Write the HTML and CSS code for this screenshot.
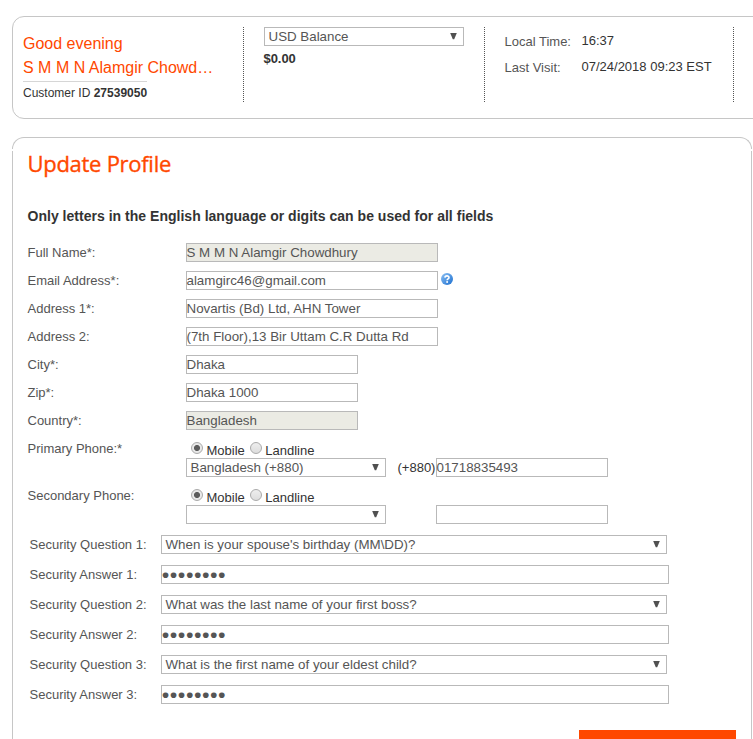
FILE: index.html
```html
<!DOCTYPE html>
<html lang="en">
<head>
<meta charset="utf-8">
<title>Update Profile</title>
<link rel="stylesheet" href="styles.css">
</head>
<body>
<svg class="defs" width="0" height="0" aria-hidden="true">
  <symbol id="arrow" viewBox="0 0 7 7"><path d="M.2 .1H6.8L4.2 6.3H2.8Z" fill="#505050"/></symbol>
</svg>
<header class="account">
  <section class="greeting">
    <div class="hello">Good evening</div>
    <div class="hello name">S M M N Alamgir Chowd…</div>
    <div class="customer">Customer ID <b>27539050</b></div>
  </section>
  <section class="balance">
    <div class="field select"><span>USD Balance</span><svg><use href="#arrow"/></svg></div>
    <div class="amount">$0.00</div>
  </section>
  <section class="times">
    <span class="key">Local Time:</span><span class="value">16:37</span>
    <span class="key">Last Visit:</span><span class="value">07/24/2018 09:23 EST</span>
  </section>
</header>
<main class="profile">
  <h1>Update Profile</h1>
  <p class="note">Only letters in the English language or digits can be used for all fields</p>
  <div class="row"><label>Full Name*:</label><div class="field wide locked">S M M N Alamgir Chowdhury</div></div>
  <div class="row"><label>Email Address*:</label><div class="field wide">alamgirc46@gmail.com</div>
    <svg class="help" viewBox="0 0 12 12"><defs><linearGradient id="blue" x2="1" y2="1"><stop stop-color="#8cc0f3"/><stop offset="1" stop-color="#1b6fd0"/></linearGradient></defs><circle cx="6" cy="6" r="6" fill="url(#blue)"/><path d="M3.9 4.6C4 2.2 8.1 2.3 8 4.6C7.9 5.9 6.1 5.8 6.1 7.2" fill="none" stroke="#fff" stroke-width="1.6"/><circle cx="6.1" cy="9.1" r="1" fill="#fff"/></svg></div>
  <div class="row"><label>Address 1*:</label><div class="field wide">Novartis (Bd) Ltd, AHN Tower</div></div>
  <div class="row"><label>Address 2:</label><div class="field wide">(7th Floor),13 Bir Uttam C.R Dutta Rd</div></div>
  <div class="row"><label>City*:</label><div class="field">Dhaka</div></div>
  <div class="row"><label>Zip*:</label><div class="field">Dhaka 1000</div></div>
  <div class="row"><label>Country*:</label><div class="field locked">Bangladesh</div></div>
  <div class="row phone"><label>Primary Phone:*</label>
    <div class="phone-body">
      <div class="kinds"><i class="radio on"></i><span class="mobile">Mobile</span><i class="radio"></i><span>Landline</span></div>
      <div class="numbers"><div class="field select">Bangladesh (+880)<svg><use href="#arrow"/></svg></div><span class="code">(+880)</span><div class="field">01718835493</div></div>
    </div>
  </div>
  <div class="row phone"><label>Secondary Phone:</label>
    <div class="phone-body">
      <div class="kinds"><i class="radio on"></i><span class="mobile">Mobile</span><i class="radio"></i><span>Landline</span></div>
      <div class="numbers"><div class="field select"><svg><use href="#arrow"/></svg></div><span class="code"></span><div class="field"></div></div>
    </div>
  </div>
  <div class="security">
    <label>Security Question 1:</label><div class="field select">When is your spouse's birthday (MM\DD)?<svg><use href="#arrow"/></svg></div>
    <label>Security Answer 1:</label><div class="field secret">●●●●●●●●</div>
    <label>Security Question 2:</label><div class="field select">What was the last name of your first boss?<svg><use href="#arrow"/></svg></div>
    <label>Security Answer 2:</label><div class="field secret">●●●●●●●●</div>
    <label>Security Question 3:</label><div class="field select">What is the first name of your eldest child?<svg><use href="#arrow"/></svg></div>
    <label>Security Answer 3:</label><div class="field secret">●●●●●●●●</div>
  </div>
  <div class="submit"></div>
</main>
</body>
</html>
```
FILE: styles.css
```css
* { box-sizing: border-box; }
html { overflow: hidden; }
body {
  margin: 0;
  height: 739px;
  padding: 16px 0 0 12px;
  overflow: hidden;
  background: #fff;
  color: #333;
  font: 13px/17px "Liberation Sans", Arial, sans-serif;
  white-space: nowrap;
}
.defs { display: block; position: absolute; }

.account {
  width: 760px;
  height: 103px;
  padding: 10px 0 0 10px;
  display: flex;
  border: 1px solid #c6c6c6;
  border-radius: 12px;
}
.account section { height: 75px; border-right: 1px dotted #555; }
.greeting { width: 221px; padding-top: 5px; }
.hello { color: #ff4800; font-size: 16px; line-height: 24px; }
.customer {
  width: 124px;
  margin-top: 1px;
  padding-top: 3px;
  border-top: 1px solid #d6d6d6;
  font-size: 12px;
}
.balance { width: 241px; padding-left: 20px; }
.amount {
  margin-top: 4px;
  font-weight: bold;
  letter-spacing: -.1px;
  text-indent: -.4px;
}
.times {
  width: 249px;
  padding: 5px 0 0 19.5px;
  display: grid;
  grid-template-columns: 77px auto;
  grid-auto-rows: 26px;
}
.key { color: #555; padding-top: 1px; }

.profile {
  position: relative;
  width: 740px;
  height: 602px;
  margin-top: 18px;
  padding: 9px 15px 0;
  border: 1px solid #c6c6c6;
  border-bottom: 0;
  border-radius: 12px 12px 0 0;
}
/* seams between the corner caps and the sides */
.profile::before {
  content: "";
  position: absolute;
  top: 11px;
  left: -1px;
  right: -1px;
  height: 2px;
  border: solid #fff;
  border-width: 0 1px;
}
h1 {
  margin: 0;
  color: #ff4800;
  font: 22px/32px "Open Sans", sans-serif;
  letter-spacing: -.28px;
  text-indent: -.5px;
  -webkit-text-stroke: .35px #ff4800;
}
.note {
  margin: 28px 0 18px;
  font-size: 14px;
  font-weight: bold;
  line-height: 18px;
  letter-spacing: .02px;
  text-indent: -.5px;
}
.row { display: flex; height: 28px; }
label { color: #555; line-height: 19px; text-indent: -.5px; }
.row label { width: 158px; }
.field {
  width: 172px;
  height: 19px;
  border: 1px solid #b9b9b9;
  color: #555;
  font-size: 13.33px;
  line-height: 17px;
  text-indent: -.5px;
}
.wide { width: 252px; }
.locked { background: #ebebe4; }
.select {
  width: 200px;
  padding: 0 6px 0 4px;
  display: flex;
}
.select svg { width: 7px; height: 7px; margin: 5px 0 0 auto; }
.help { width: 12px; height: 12px; margin: 2px 0 0 3px; }
.phone { height: 47px; }
.kinds { display: flex; height: 19px; padding: 3px 0 0 5px; text-indent: -.5px; }
.radio {
  width: 12px;
  height: 12px;
  margin: 0 4px 0 0;
  border: 1px solid #aaa;
  border-radius: 50%;
  background: linear-gradient(#eee, #ddd);
}
.radio.on { background: radial-gradient(circle, #5c5c5c 2.7px, #e8e8e8 3.3px); }
.mobile { margin-right: 5px; }
.numbers { display: flex; }
.code { width: 50px; padding: 1px 0 0 11.5px; }
.security {
  margin-top: 2px;
  padding-left: 2px;
  display: grid;
  grid-template-columns: 131px auto;
  grid-auto-rows: 30px;
}
.security .select { width: 506px; }
.field.secret { width: 508px; }
.submit {
  width: 157px;
  height: 9px;
  margin: 15px 0 0 551px;
  background: #ff4800;
}
```
